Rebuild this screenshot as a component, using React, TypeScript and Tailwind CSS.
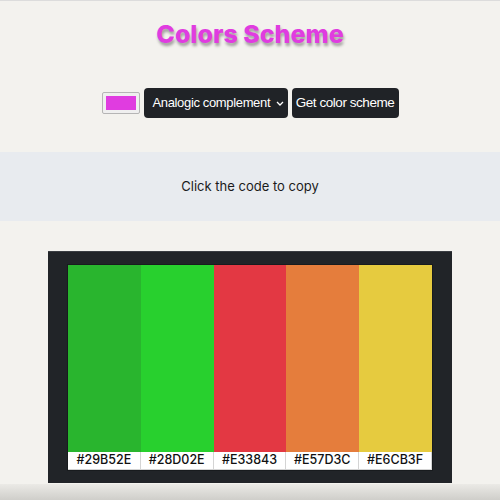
import { useState } from "react"

const colors = ["#29B52E", "#28D02E", "#E33843", "#E57D3C", "#E6CB3F"]

export default function App() {
  const [seed] = useState("#E03CE0")

  return (
    <div className="relative min-h-[500px] bg-[#f3f2ee] border-t border-[#dcdcdc] font-['Inter',sans-serif] overflow-hidden">
      <h1 className="pt-[18px] text-center text-[25px] font-extrabold leading-[30px] text-[#e03ce0] [text-shadow:1px_3px_3px_rgba(0,0,0,0.35)]">
        Colors Scheme
      </h1>

      <div className="mt-[39px] flex items-center justify-center gap-[4px]">
        <div className="w-[38px] h-[22px] border border-[#b5b5b5] rounded-[2px] bg-[#efefef] p-[3px]">
          <div className="w-full h-full" style={{ backgroundColor: seed }} />
        </div>
        <div className="flex items-center w-[144px] h-[30px] rounded-[4px] bg-[#202327] text-white pl-[9px] pr-[4px] font-['Liberation_Sans',sans-serif] text-[13px] tracking-[-0.35px] whitespace-nowrap">
          <span className="flex-1">Analogic complement</span>
          <svg width="8" height="5" viewBox="0 0 8 5" fill="none">
            <path d="M1 1l3 3L7 1" stroke="white" strokeWidth="1.3" />
          </svg>
        </div>
        <button className="w-[107px] h-[30px] rounded-[4px] bg-[#202327] text-white font-['Liberation_Sans',sans-serif] text-[13.5px] tracking-[-0.45px] whitespace-nowrap">
          Get color scheme
        </button>
      </div>

      <div className="mt-[34px] h-[69px] bg-[#e8ebef] flex items-center justify-center text-[13px] text-[#1b1b1b]">
        Click the code to copy
      </div>

      <div className="mt-[30px] mx-auto w-[404px] h-[232px] bg-[#212428] border-t border-[#3a3d42] pt-[13px] px-[20px]">
        <div className="grid grid-cols-5 shadow-[0_0_0_1px_rgba(0,0,0,0.25)]">
          {colors.map((c) => (
            <div key={c} className="flex flex-col">
              <div className="h-[187px]" style={{ backgroundColor: c }} />
              <div className="h-[18px] bg-white border-r border-b border-[#d4d4d4] flex items-center justify-center text-[12.5px] font-medium text-[#111] cursor-pointer">
                {c}
              </div>
            </div>
          ))}
        </div>
      </div>

      <div className="absolute left-0 right-0 bottom-0 h-[16px] bg-gradient-to-b from-[#ebeae6] to-[#cfceca]" />
    </div>
  )
}
